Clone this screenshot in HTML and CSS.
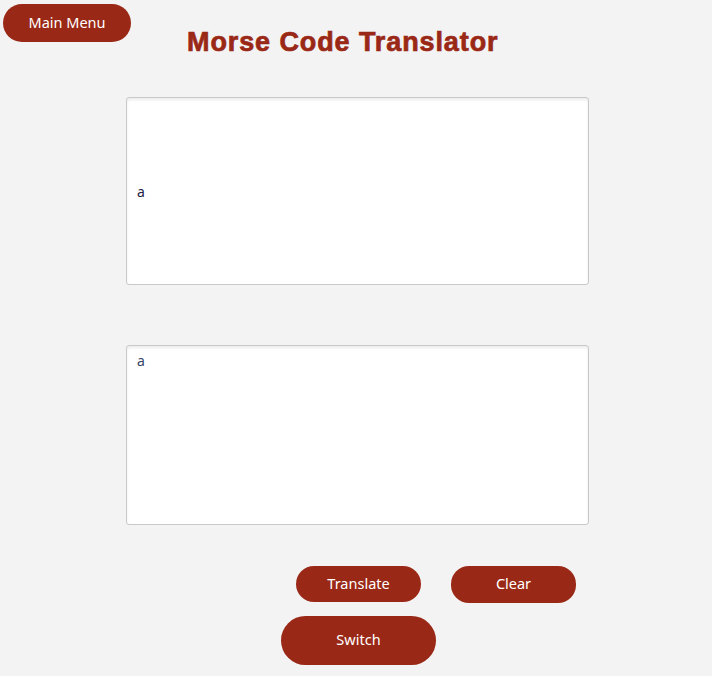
FILE: index.html
```html
<!DOCTYPE html>
<html lang="en">
<head>
<meta charset="utf-8">
<title>Morse Code Translator</title>
<link rel="stylesheet" href="styles.css">
</head>
<body>
<header class="top">
  <button class="btn btn-menu">Main Menu</button>
  <h1 class="title">Morse Code Translator</h1>
</header>
<main class="panel">
  <div class="box box-input"><span>a</span></div>
  <textarea class="box box-output">a</textarea>
  <div class="actions">
    <button class="btn btn-action">Translate</button>
    <button class="btn btn-action btn-clear">Clear</button>
  </div>
  <div class="switch-row">
    <button class="btn btn-switch">Switch</button>
  </div>
</main>
</body>
</html>
```

FILE: styles.css
```css
* { box-sizing: border-box; }
html, body { margin: 0; padding: 0; }
body {
  background: #f3f3f3;
  font-family: "Noto Sans", "Open Sans", sans-serif;
  width: 712px;
  height: 676px;
  overflow: hidden;
}
.top {
  display: flex;
  align-items: flex-start;
  padding: 4px 0 0 3px;
  height: 97px;
}
.btn {
  border: none;
  background: #9a2816;
  color: #ffffff;
  font-family: "Noto Sans", "Open Sans", sans-serif;
  font-size: 14.5px;
  line-height: 1.2;
  padding: 0 0 1px;
  cursor: pointer;
}
.btn-menu {
  width: 128px;
  height: 38px;
  border-radius: 19px;
}
.title {
  margin: 22px 0 0 56px;
  font-family: "Liberation Sans", Arial, sans-serif;
  font-weight: 900;
  font-size: 27px;
  line-height: 32px;
  color: #9a2816;
  letter-spacing: 0.9px;
  -webkit-text-stroke: 0.7px #9a2816;
}
.panel {
  margin-left: 126px;
  width: 463px;
}
.box {
  display: block;
  width: 463px;
  background: #ffffff;
  border: 1px solid #c9c9c9;
  border-radius: 3px;
  box-shadow: inset 0 2px 3px rgba(0,0,0,0.08);
  font-family: "Noto Sans", "Open Sans", sans-serif;
  font-size: 14px;
  color: #222244;
}
.box-input {
  height: 188px;
  display: flex;
  align-items: center;
  padding: 0 10px;
}
.box-output {
  margin-top: 60px;
  height: 180px;
  padding: 5px 10px;
  resize: none;
  outline: none;
  color: #334466;
}
.actions {
  display: flex;
  gap: 30px;
  margin-top: 41px;
  padding-left: 170px;
}
.btn-action {
  width: 125px;
  height: 36px;
  border-radius: 18px;
}
.btn-clear { height: 37px; }
.switch-row {
  margin-top: 13px;
  padding-left: 155px;
}
.btn-switch {
  width: 155px;
  height: 49px;
  border-radius: 25px;
}
```
